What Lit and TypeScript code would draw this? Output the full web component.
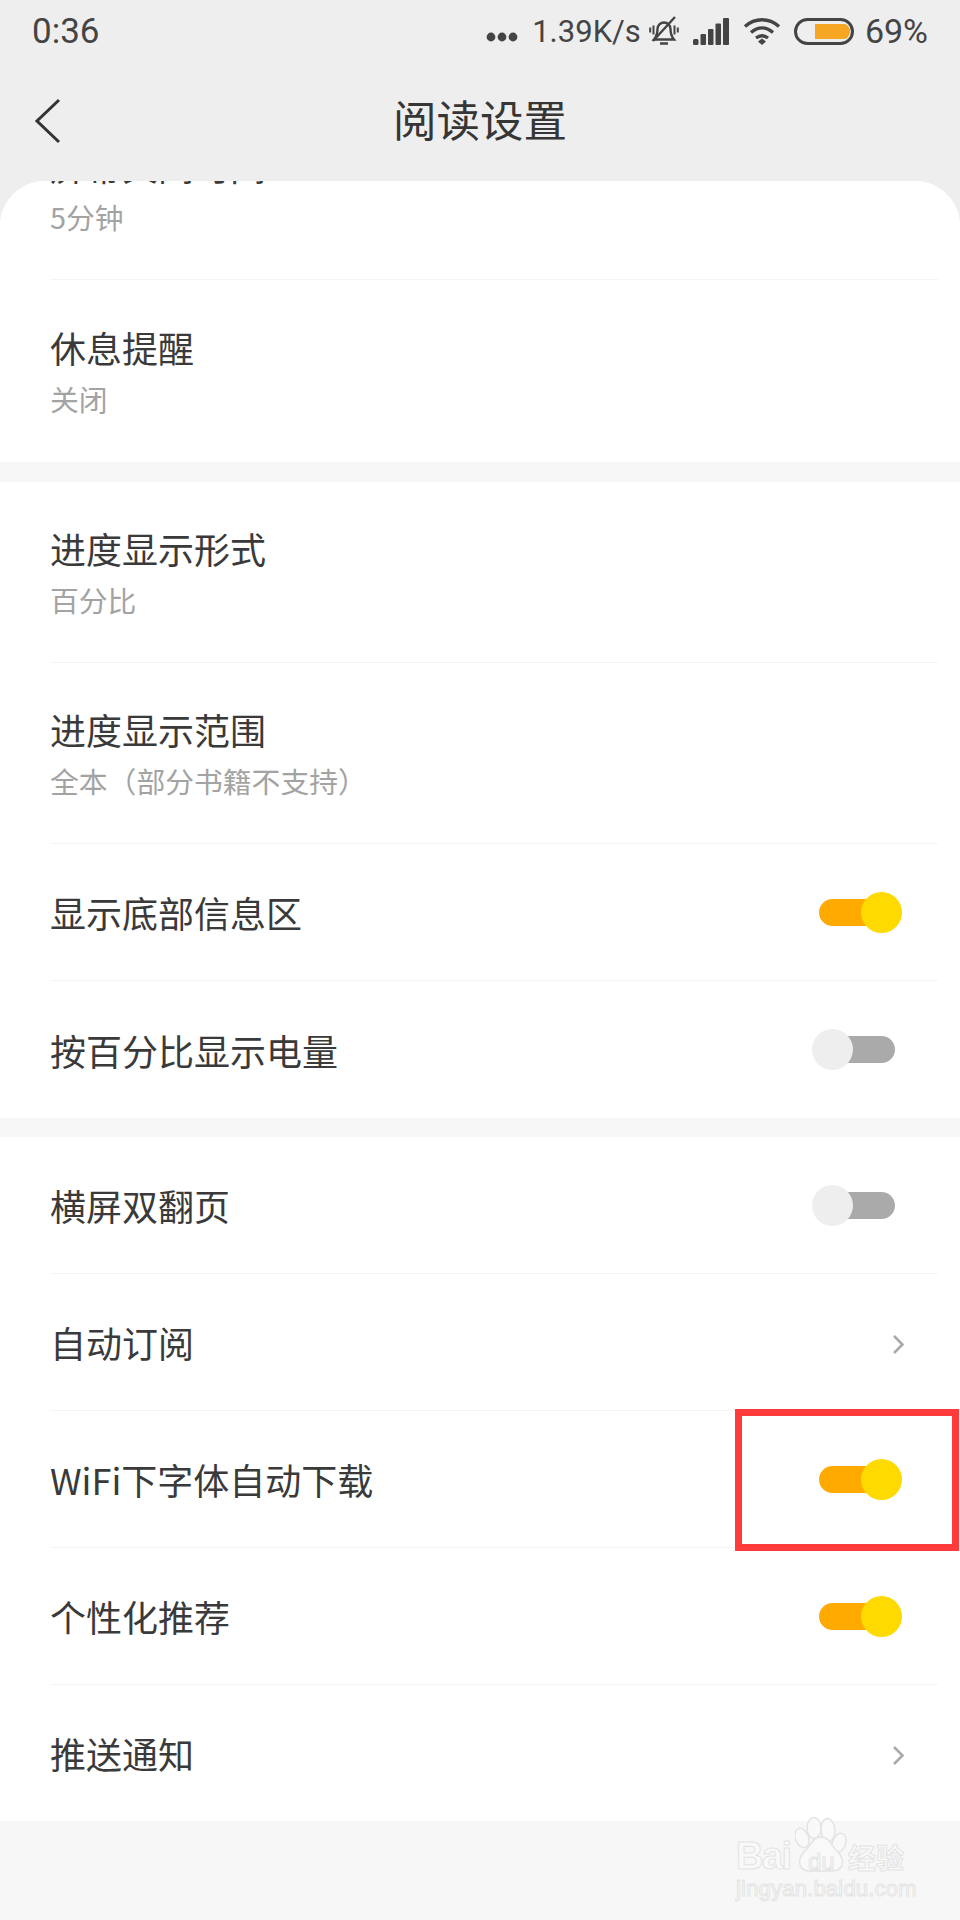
import { LitElement, html, css, svg } from "lit";
import { customElement } from "lit/decorators.js";

type Row = { title: string; sub?: string; toggle?: boolean; chevron?: boolean };

const section2: Row[] = [
  { title: "进度显示形式", sub: "百分比" },
  { title: "进度显示范围", sub: "全本（部分书籍不支持）" },
  { title: "显示底部信息区", toggle: true },
  { title: "按百分比显示电量", toggle: false },
];
const section3: Row[] = [
  { title: "横屏双翻页", toggle: false },
  { title: "自动订阅", chevron: true },
  { title: "WiFi下字体自动下载", toggle: true },
  { title: "个性化推荐", toggle: true },
  { title: "推送通知", chevron: true },
];
const section1: Row[] = [
  { title: "屏幕关闭时间", sub: "5分钟" },
  { title: "休息提醒", sub: "关闭" },
];

@customElement("app-root")
export class AppRoot extends LitElement {
  static styles = css`
    :host {
      display: block;
      width: 960px;
      height: 1920px;
      position: relative;
      overflow: hidden;
      background: #f7f7f7;
      font-family: "Noto Sans CJK SC", "Liberation Sans", sans-serif;
    }
    .top { background: #eeeeee; height: 181px; display: flex; flex-direction: column; }
    .status {
      height: 62px; display: flex; align-items: center; padding: 0 32px;
      color: #444; font-family: Roboto, "Liberation Sans", sans-serif; font-size: 31px;
    }
    .time { flex: 1; font-size: 35px; }
    .status-right { display: flex; align-items: center; }
    .dots { margin: 12px 14px 0 0; }
    .bell { margin-left: 8px; }
    .signal { margin-left: 14px; }
    .wifi { margin-left: 14px; }
    .batt { margin-left: 13px; }
    .pct { margin-left: 11px; font-size: 34px; }
    .nav { height: 119px; display: flex; align-items: flex-start; position: relative; justify-content: center; }
    .nav h1 { margin: 27px 0 0; font-size: 43.5px; font-weight: 400; line-height: 60px; color: #363636; }
    .back { position: absolute; left: 34px; top: 36px; }
    .content { height: 1739px; overflow: hidden; background: #eeeeee; }
    .scroll { background: #f7f7f7; height: 1739px; border-radius: 45px 45px 0 0; overflow: hidden; }
    .section { background: #fff; }
    .section + .section { margin-top: 19px; }
    .first { margin-top: -82px; padding-bottom: 1px; }
    .first + .section { margin-top: 20px; }
    .row { margin: 0 22px 0 50px; display: flex; align-items: center; border-bottom: 1px solid #f4f4f4; box-sizing: border-box; }
    .row.plain { height: 137px; }
    .row.double { height: 181px; }
    .row.last { border-bottom: 0; }
    .section:last-child .row.last { height: 136px; }
    .text { flex: 1; display: flex; flex-direction: column; }
    .title { font-size: 36px; line-height: 50px; color: #3a3a3a; }
    .sub { font-size: 28.8px; line-height: 42px; color: #a3a3a3; margin-top: 6px; }
    .sw { position: relative; width: 76px; height: 27px; border-radius: 14px; background: #aaaaaa; margin-right: 43px; }
    .sw.on { background: #ffaa00; }
    .knob { position: absolute; top: -7px; left: -7px; width: 41px; height: 41px; border-radius: 50%; background: #eeeeee; }
    .sw.on .knob { left: 42px; background: #ffda00; }
    .chev { margin: 4px 33px 0 0; display: block; }
    .mark {
      position: absolute; left: 735px; top: 1409px; width: 224px; height: 142px;
      box-sizing: border-box; border: 7px solid #ff3b3b;
    }
    .wm { position: absolute; left: 736px; top: 1817px; width: 180px; color: #f9f9f9; font-family: "Liberation Sans", sans-serif; }
    .wm-top { display: flex; align-items: flex-end; height: 56px; }
    .wm-bai, .wm-du, .wm-cn, .wm-url { -webkit-text-stroke: 1px #e4e4e4; }
    .wm-bai { font-size: 38px; font-weight: 700; line-height: 34px; letter-spacing: -1.5px; width: 59px; flex: none; }
    .wm-paw { position: relative; width: 53px; height: 56px; flex: none; }
    .wm-paw svg { position: absolute; left: 0; top: 0; }
    .wm-du { position: absolute; left: 13px; top: 33px; font-size: 24px; line-height: 24px; }
    .wm-cn { font-size: 28px; font-weight: 700; line-height: 32px; font-family: "Noto Sans CJK SC", sans-serif; }
    .wm-url { font-size: 22px; line-height: 26px; letter-spacing: 0.2px; margin-top: 3px; }
  `;

  private renderRow(r: Row, last: boolean) {
    const cls = `row ${r.sub ? "double" : "plain"} ${last ? "last" : ""}`;
    return html`<div class=${cls}>
      <div class="text">
        <span class="title">${r.title}</span>
        ${r.sub ? html`<span class="sub">${r.sub}</span>` : ""}
      </div>
      ${r.toggle !== undefined
        ? html`<div class="sw ${r.toggle ? "on" : ""}"><div class="knob"></div></div>`
        : ""}
      ${r.chevron
        ? html`<svg class="chev" width="13" height="21" viewBox="0 0 13 21" fill="none" stroke="#aaa" stroke-width="2.6"><path d="M2 2l8.500 8.500L2 19"/></svg>`
        : ""}
    </div>`;
  }

  private renderSection(rows: Row[], extra = "") {
    return html`<div class="section ${extra}">
      ${rows.map((r, i) => this.renderRow(r, i === rows.length - 1))}
    </div>`;
  }

  private statusIcons() {
    return html`
      <svg class="dots" width="32" height="12" viewBox="0 0 32 12" fill="#444">
        <circle cx="5" cy="6" r="4.400"/><circle cx="16" cy="6" r="4.400"/><circle cx="27" cy="6" r="4.400"/>
      </svg>
      <span>1.39K/s</span>
      <svg class="bell" width="30" height="30" viewBox="0 0 30 30" fill="none" stroke="#444" stroke-width="2.400">
        <path d="M5 23.500c2.500-3 3.500-6 3.500-10.500a6.500 6.500 0 0 1 13 0c0 4.500 1 7.500 3.500 10.500z"/>
        <path d="M11 27.500h8M26 1L4 25"/>
        <path d="M4.500 9.500v9M1.200 11.500v5M25.500 9.500v9M28.800 11.500v5" stroke-width="2"/>
      </svg>
      <svg class="signal" width="36" height="27" viewBox="0 0 36 27" fill="#444">
        <rect x="0" y="21" width="5.500" height="6" rx="1.500"/><rect x="7.500" y="16" width="5.500" height="11" rx="1"/>
        <rect x="15" y="11" width="5.500" height="16" rx="1"/><rect x="22.500" y="5.500" width="5.500" height="21.500" rx="1"/>
        <rect x="30" y="0" width="6" height="27" rx="1"/>
      </svg>
      <svg class="wifi" width="38" height="27" viewBox="0 0 38 27" fill="none" stroke="#444" stroke-width="3.400">
        <path d="M2 8.500c10-9 24-9 34 0M8 14.500c7-6 15-6 22 0M13 20c4-3 8-3 12 0"/>
        <path d="M15 23.500l4-3 4 3-4 3.500z" fill="#444" stroke="none"/>
      </svg>
      <svg class="batt" width="60" height="27" viewBox="0 0 60 27" fill="none">
        <rect x="1.500" y="1.500" width="57" height="24" rx="12" stroke="#444" stroke-width="3"/>
        <path d="M21 6h29a6 7.500 0 0 1 6 7.500 6 7.500 0 0 1-6 7.500H21z" fill="#f5a623"/>
      </svg>
      <span class="pct">69%</span>
    `;
  }

  render() {
    return html`
      <div class="top">
        <div class="status">
          <span class="time">0:36</span>
          <div class="status-right">${this.statusIcons()}</div>
        </div>
        <div class="nav">
          <svg class="back" width="28" height="46" viewBox="0 0 28 46" fill="none" stroke="#333" stroke-width="3"><path d="M25 2L3 23l22 21"/></svg>
          <h1>阅读设置</h1>
        </div>
      </div>
      <div class="content">
        <div class="scroll">
          ${this.renderSection(section1, "first")}
          ${this.renderSection(section2)}
          ${this.renderSection(section3)}
        </div>
      </div>
      <div class="mark"></div>
      <div class="wm">
        <div class="wm-top">
          <span class="wm-bai">Bai</span>
          <div class="wm-paw">
            <svg width="52" height="56" viewBox="0 0 52 56" fill="#f9f9f9" stroke="#e4e4e4" stroke-width="1.500">
              ${svg`<ellipse cx="7" cy="21" rx="6.500" ry="10" transform="rotate(-20 7 21)"/>
              <ellipse cx="19" cy="11" rx="7" ry="10.500"/><ellipse cx="33" cy="13" rx="7" ry="11.500" transform="rotate(-5 33 13)"/>
              <ellipse cx="44" cy="26" rx="6.500" ry="10" transform="rotate(20 44 26)"/>
              <path d="M26 20c8 0 10 8 15 13 6 5 8 12 5 17-3 5-11 4-20 4s-17 1-20-4c-3-5-1-12 5-17 5-5 7-13 15-13z"/>`}
            </svg>
            <span class="wm-du">du</span>
          </div>
          <span class="wm-cn">经验</span>
        </div>
        <div class="wm-url">jingyan.baidu.com</div>
      </div>
    `;
  }
}
